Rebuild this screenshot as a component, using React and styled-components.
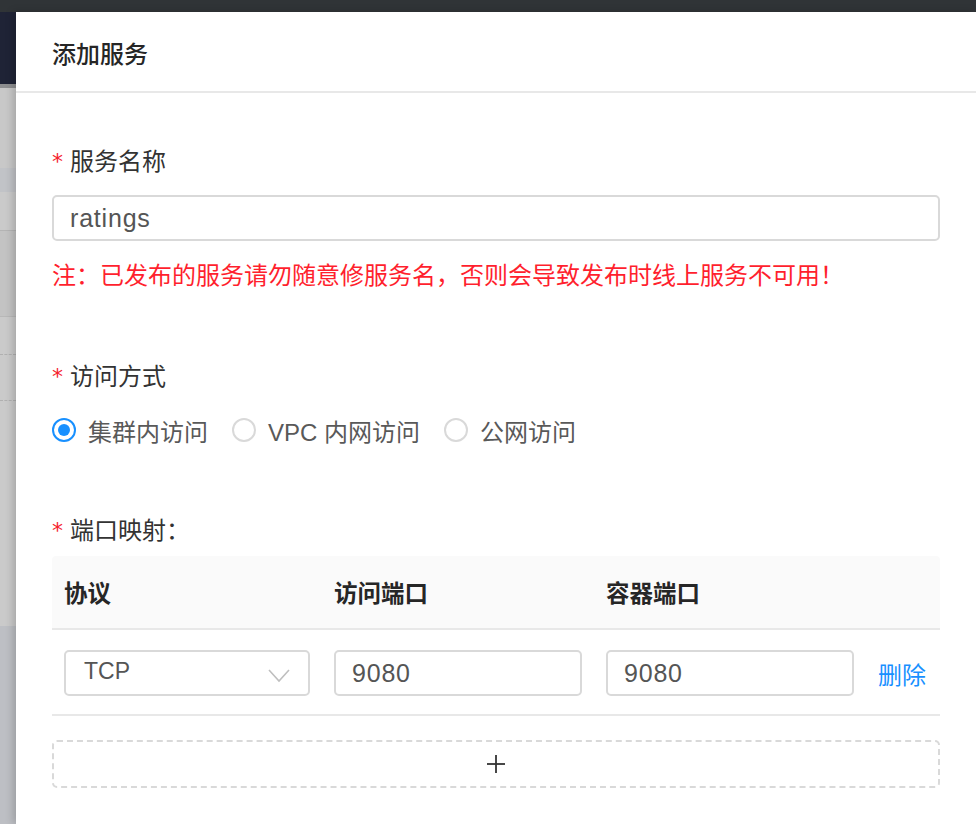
import React from 'react';
import styled, { createGlobalStyle } from 'styled-components';

const Global = createGlobalStyle`
  html, body { margin: 0; padding: 0; }
  body {
    width: 976px;
    height: 824px;
    overflow: hidden;
    background: #c9c9c9;
    font-family: "Liberation Sans", "Noto Sans CJK SC", sans-serif;
  }
`;

const Page = styled.div`
  width: 976px;
  height: 824px;
  display: flex;
  flex-direction: column;
`;

const TopBar = styled.div`
  height: 12px;
  flex-shrink: 0;
  background: #303437;
`;

const Main = styled.div`
  flex: 1;
  display: flex;
  min-height: 0;
`;

const Strip = styled.div`
  width: 16px;
  flex-shrink: 0;
  display: flex;
  flex-direction: column;
`;

const Block = styled.div`
  height: ${({ h }) => h}px;
  flex: ${({ grow }) => (grow ? 1 : 'none')};
  background: ${({ bg }) => bg};
  border-top: ${({ line }) => (line ? `1px ${line}` : 'none')};
  box-sizing: border-box;
`;

const Drawer = styled.div`
  flex: 1;
  background: #fff;
  box-shadow: -3px 0 8px rgba(0, 0, 0, 0.18);
  display: flex;
  flex-direction: column;
`;

const Header = styled.div`
  box-sizing: border-box;
  height: 81px;
  padding: 2px 36px 0;
  display: flex;
  align-items: center;
  border-bottom: 2px solid #e8e8e8;
  font-size: 24px;
  font-weight: 500;
  color: #262626;
`;

const Body = styled.div`
  padding: 48px 36px 0;
`;

const Label = styled.div`
  display: flex;
  align-items: center;
  height: 36px;
  font-size: 24px;
  color: #333;
  margin-top: ${({ mt }) => mt || 0}px;
`;

const Star = styled.span`
  color: #f5222d;
  font-size: 22px;
  font-family: "DejaVu Sans", sans-serif;
  width: 18px;
  margin-top: 4px;
`;

const Input = styled.div`
  box-sizing: border-box;
  height: 46px;
  width: ${({ w }) => (w ? `${w}px` : '100%')};
  border: 2px solid #d9d9d9;
  border-radius: 5px;
  padding: 0 16px;
  display: flex;
  align-items: center;
  font-size: 25px;
  letter-spacing: 0.8px;
  color: #555;
  margin-top: ${({ mt }) => mt || 0}px;
  background: #fff;
`;

const Note = styled.div`
  margin-top: 17px;
  height: 36px;
  line-height: 36px;
  font-size: 24px;
  color: #ff1f2e;
  white-space: nowrap;
`;

const RadioGroup = styled.div`
  margin-top: 20px;
  height: 36px;
  display: flex;
  align-items: center;
  gap: 24px;
`;

const RadioItem = styled.label`
  display: flex;
  align-items: center;
  gap: 12px;
  font-size: 24px;
  color: #595959;
`;

const Circle = styled.span`
  box-sizing: border-box;
  width: 24px;
  height: 24px;
  border-radius: 50%;
  border: 2px solid ${({ checked }) => (checked ? '#1890ff' : '#d9d9d9')};
  display: flex;
  align-items: center;
  justify-content: center;
  &::after {
    content: '';
    width: 12px;
    height: 12px;
    border-radius: 50%;
    background: ${({ checked }) => (checked ? '#1890ff' : 'transparent')};
  }
`;

const Table = styled.div`
  margin-top: 10px;
`;

const Row = styled.div`
  display: grid;
  grid-template-columns: 270px 272px 272px 1fr;
  border-bottom: 2px solid #e8e8e8;
  background: ${({ head }) => (head ? '#fafafa' : '#fff')};
  height: ${({ head }) => (head ? 72 : 84)}px;
  border-radius: ${({ head }) => (head ? '4px 4px 0 0' : '0')};
`;

const Cell = styled.div`
  padding: 0 12px;
  display: flex;
  align-items: center;
  font-size: 23.5px;
  font-weight: ${({ head }) => (head ? 600 : 400)};
  color: #262626;
  padding-top: ${({ head }) => (head ? 0 : 2)}px;
`;

const Select = styled(Input)`
  justify-content: space-between;
  padding: 0 18px 3px;
  font-size: 23px;
  letter-spacing: 0;
`;

const Link = styled.span`
  color: #1890ff;
  font-size: 24px;
`;

const AddButton = styled.div`
  margin-top: 24px;
  height: 48px;
  box-sizing: border-box;
  border: 2px dashed #d9d9d9;
  border-radius: 5px;
  display: flex;
  align-items: center;
  justify-content: center;
`;

const Chevron = () => (
  <svg width="22" height="14" viewBox="0 0 22 14" style={{ marginTop: 8 }}>
    <polyline points="1,1 11,12 21,1" fill="none" stroke="#bfbfbf" strokeWidth="1.6" />
  </svg>
);

const Plus = () => (
  <svg width="20" height="20" viewBox="0 0 20 20">
    <line x1="10" y1="1" x2="10" y2="19" stroke="#333" strokeWidth="1.8" />
    <line x1="1" y1="10" x2="19" y2="10" stroke="#333" strokeWidth="1.8" />
  </svg>
);

const Radio = ({ checked, children }) => (
  <RadioItem>
    <Circle checked={checked} />
    {children}
  </RadioItem>
);

export default function App() {
  return (
    <Page>
      <Global />
      <TopBar />
      <Main>
        <Strip>
          <Block h={72} bg="#1f2336" />
          <Block h={4} bg="#8d8e90" />
          <Block h={80} bg="#c8c8c8" />
          <Block h={24} bg="#c1c3c7" />
          <Block h={38} bg="#cacaca" />
          <Block h={86} bg="#c3c3c3" line="solid #b4b4b4" />
          <Block h={38} bg="#cacaca" line="solid #b8b8b8" />
          <Block h={46} bg="#cacaca" line="dashed #b0b0b0" />
          <Block h={226} bg="#cacaca" line="dashed #b0b0b0" />
          <Block grow bg="#bdbfc4" />
        </Strip>
        <Drawer>
          <Header>添加服务</Header>
          <Body>
            <Label><Star>*</Star>服务名称</Label>
            <Input mt={18}>ratings</Input>
            <Note>注：已发布的服务请勿随意修服务名，否则会导致发布时线上服务不可用！</Note>

            <Label mt={62}><Star>*</Star>访问方式</Label>
            <RadioGroup>
              <Radio checked>集群内访问</Radio>
              <Radio>VPC 内网访问</Radio>
              <Radio>公网访问</Radio>
            </RadioGroup>

            <Label mt={62}><Star>*</Star>端口映射：</Label>
            <Table>
              <Row head>
                <Cell head>协议</Cell>
                <Cell head>访问端口</Cell>
                <Cell head>容器端口</Cell>
                <Cell head />
              </Row>
              <Row>
                <Cell><Select w={246}>TCP<Chevron /></Select></Cell>
                <Cell><Input w={248}>9080</Input></Cell>
                <Cell><Input w={248}>9080</Input></Cell>
                <Cell><Link>删除</Link></Cell>
              </Row>
            </Table>
            <AddButton><Plus /></AddButton>
          </Body>
        </Drawer>
      </Main>
    </Page>
  );
}
